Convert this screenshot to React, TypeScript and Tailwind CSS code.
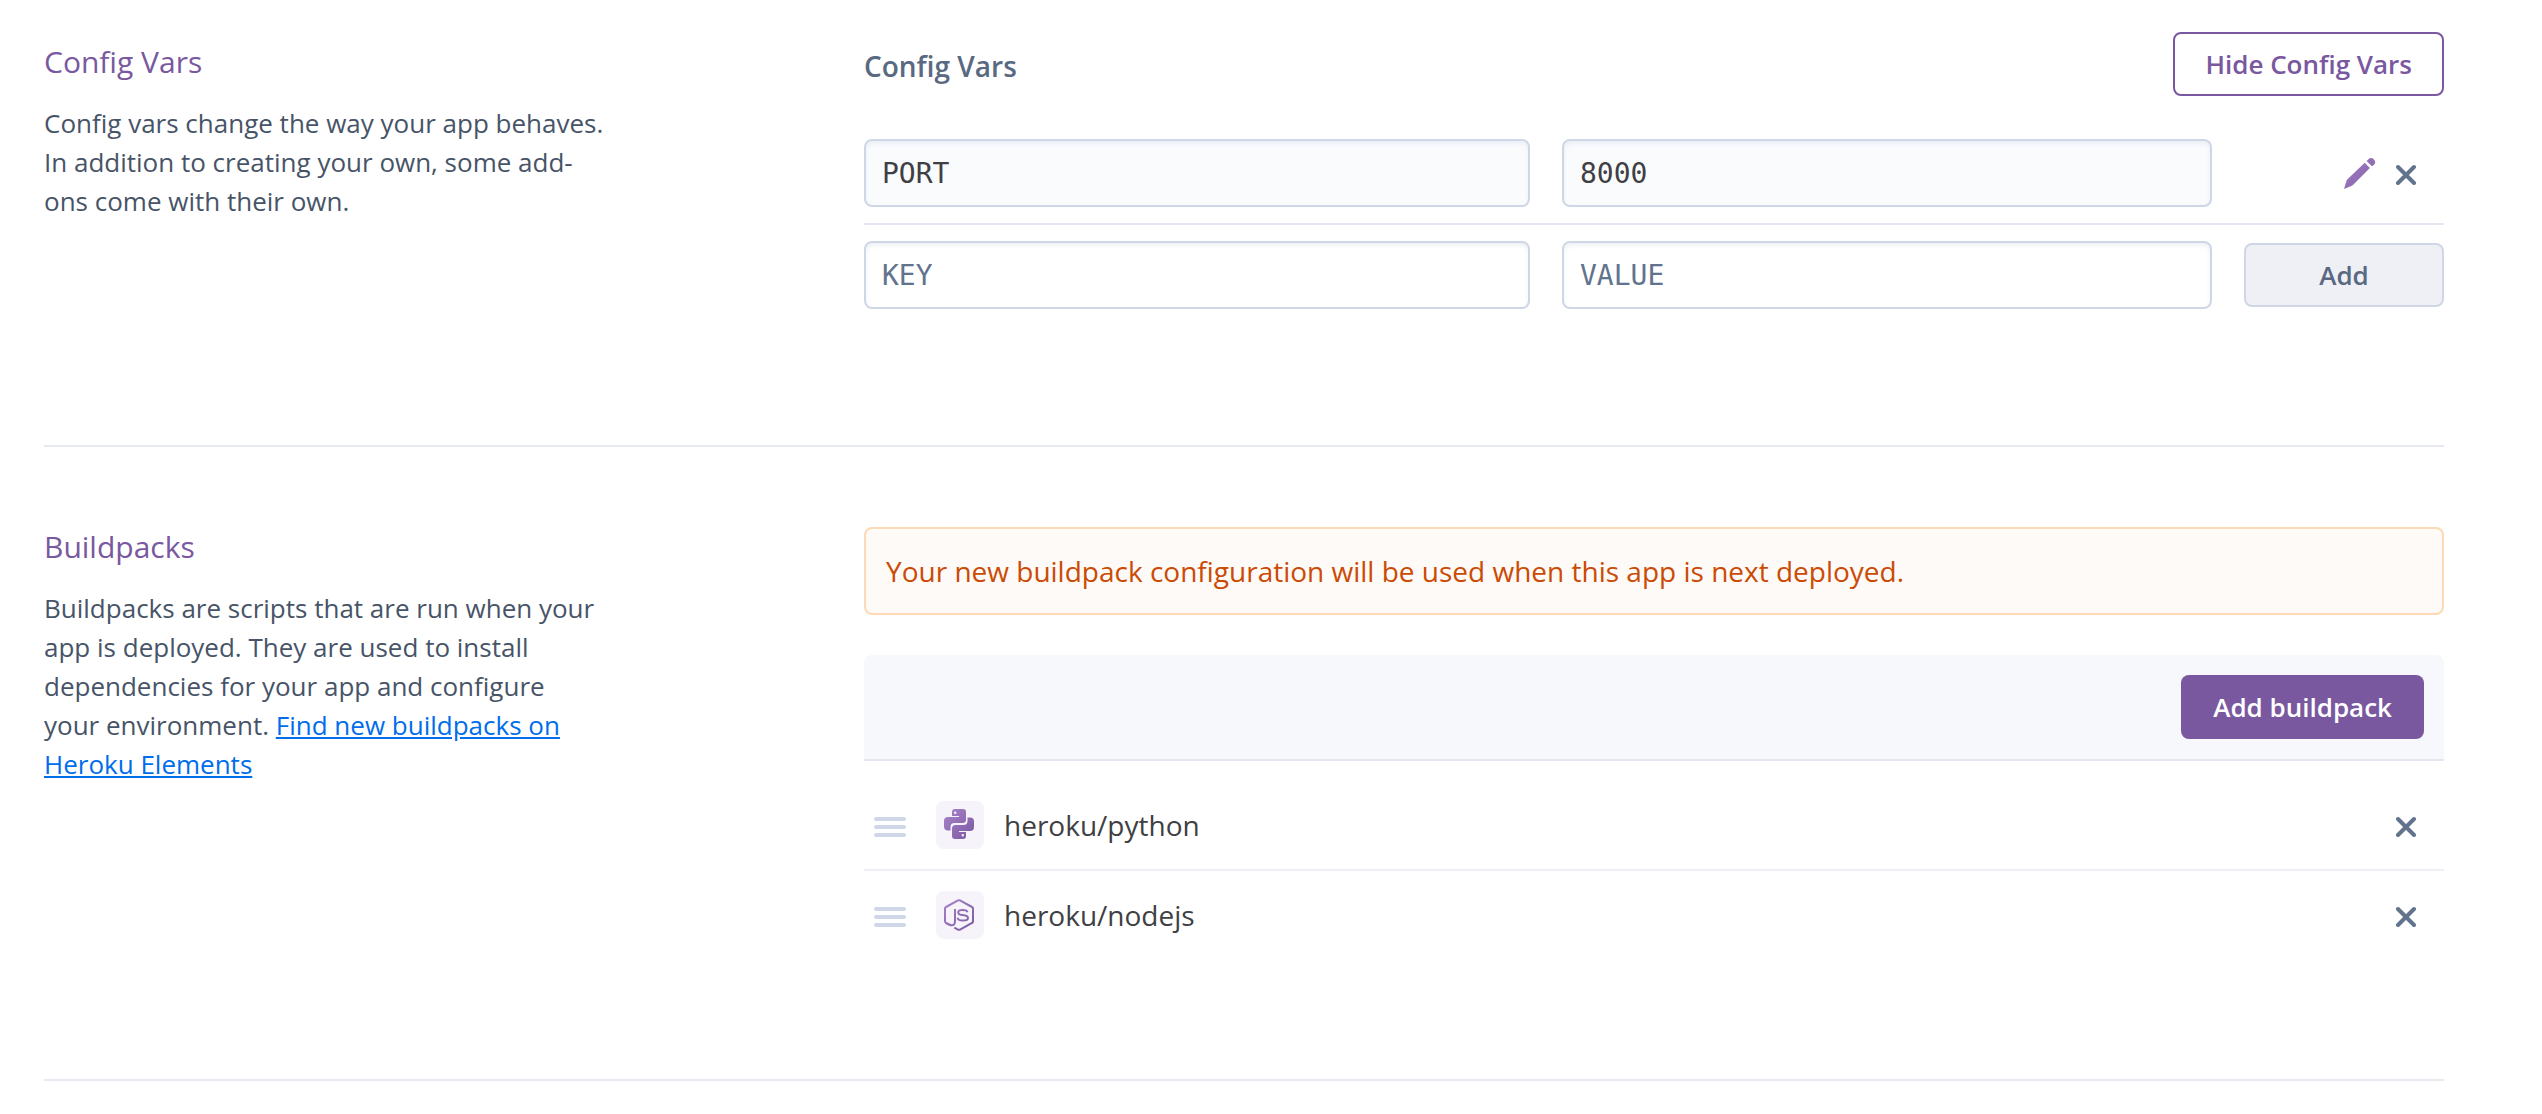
import React from "react";

function CloseIcon() {
  return (
    <svg className="h-6 w-5" viewBox="0 -4 20 24" fill="none" stroke="#62738d" strokeWidth="4" strokeLinecap="round" aria-hidden="true">
      <path d="M2 2 18 18M18 2 2 18" />
    </svg>
  );
}

function PencilIcon() {
  return (
    <svg className="size-8" viewBox="0 0 32 32" aria-hidden="true">
      <defs>
        <linearGradient id="pencil" x1="0" y1="0" x2="1" y2="1">
          <stop offset="0" stopColor="#a07cc3" />
          <stop offset="1" stopColor="#8763ab" />
        </linearGradient>
      </defs>
      <path
        fill="url(#pencil)"
        d="M0 32 2.6 23.6Q2.9 22.8 3.5 22.2L20.7 5.8 25.9 11 9.2 27.7Q8.6 28.3 7.8 28.7ZM22.6 4 24.2 2.4A3.9 3.9 0 0 1 29.8 7.9L27.9 9.3Z"
      />
    </svg>
  );
}

function PythonIcon() {
  const half =
    "M8 3Q8 0 11 0H19Q22 0 22 3V10.5Q22 14 18.5 14H10.5Q6.5 14 6.5 18V21.5H4Q0 21.5 0 17.5V12Q0 8 4 8H15V7H8ZM11.2 2.5A1.2 1.2 0 1 0 11.2 4.9 1.2 1.2 0 1 0 11.2 2.5Z";
  return (
    <svg className="size-8" viewBox="0 0 32 32" aria-hidden="true">
      <defs>
        <linearGradient id="python" gradientUnits="userSpaceOnUse" x1="0" y1="0" x2="30" y2="30">
          <stop offset="0" stopColor="#a983cb" />
          <stop offset="1" stopColor="#79589f" />
        </linearGradient>
        <linearGradient id="python-turned" gradientUnits="userSpaceOnUse" x1="30" y1="30" x2="0" y2="0">
          <stop offset="0" stopColor="#a983cb" />
          <stop offset="1" stopColor="#79589f" />
        </linearGradient>
      </defs>
      <path fill="url(#python)" fillRule="evenodd" d={half} />
      <path fill="url(#python-turned)" fillRule="evenodd" d={half} transform="rotate(180 15 15)" />
    </svg>
  );
}

function NodeIcon() {
  return (
    <svg className="size-8" viewBox="0 0 32 32" fill="none" stroke="url(#node)" strokeWidth="2" aria-hidden="true">
      <defs>
        <linearGradient id="node" gradientUnits="userSpaceOnUse" x1="0" y1="0" x2="30" y2="32">
          <stop offset="0" stopColor="#a983cb" />
          <stop offset="1" stopColor="#79589f" />
        </linearGradient>
      </defs>
      <path d="M11 10V22Q11 26.5 7.3 26.3 6 26.2 2 24 1 23.3 1 22V9.5Q1 8.5 2 8L14 1.4Q15 .9 16 1.4L28 8Q29 8.5 29 9.5V22.5Q29 23.5 28 24L16.5 30.4Q15 31.2 13.5 30.4L10.3 28.6" />
      <path d="M23.4 13.2Q23 11 18.6 11 14.2 11 14.2 13.4 14.2 15.6 18.6 16 24 16.5 24 19 24 21.6 18.8 21.6 13.9 21.6 13.7 18.8" />
    </svg>
  );
}

function GripIcon() {
  return (
    <svg className="h-6 w-8" viewBox="0 -4 32 24" fill="#cfd7e6" aria-hidden="true">
      <rect width="32" height="4" rx="2" />
      <rect y="8" width="32" height="4" rx="2" />
      <rect y="16" width="32" height="4" rx="2" />
    </svg>
  );
}

const field =
  "h-[68px] w-full min-w-0 rounded-lg border-2 border-[#cfd7e6] px-4 font-['DejaVu_Sans_Mono',monospace] text-[28px] text-[#3f3f44] shadow-[inset_0_3px_4px_rgba(207,215,230,0.35)] outline-none placeholder:text-[#62738d] placeholder:opacity-100";

type SectionProps = { title: string; about: React.ReactNode; introClass?: string; children: React.ReactNode };

function Section({ title, about, introClass = "", children }: SectionProps) {
  return (
    <section className="grid grid-cols-[41fr_79fr] border-b-2 border-[#e7e9f0]">
      <div className={introClass}>
        <h2 className="text-[30px] leading-[40px] text-[#79589f]">{title}</h2>
        <p className="mt-[22px] max-w-[560px] text-[26px] leading-[39px] text-[#475468]">{about}</p>
      </div>
      <div className="min-w-0">{children}</div>
    </section>
  );
}

const buildpacks = [
  { name: "heroku/python", icon: <PythonIcon /> },
  { name: "heroku/nodejs", icon: <NodeIcon /> },
];

export default function App() {
  return (
    <main className="flex flex-col gap-20 bg-white pt-8 pr-[98px] pl-11 font-['Open_Sans',sans-serif]">
      <Section
        title="Config Vars"
        introClass="pt-[10px]"
        about="Config vars change the way your app behaves. In addition to creating your own, some add-ons come with their own."
      >
        <div className="flex items-center justify-between">
          <h3 className="pt-1 text-[28px] font-semibold text-[#596981]">Config Vars</h3>
          <button type="button" className="h-16 rounded-lg border-2 border-[#79589f] px-[30px] text-[26px] font-semibold text-[#79589f]">
            Hide Config Vars
          </button>
        </div>
        <form className="mt-[27px] pb-[136px]" onSubmit={(e) => e.preventDefault()}>
          <div className="grid grid-cols-[333fr_325fr_200px] items-center gap-8 border-b-2 border-[#e3e7ef] py-4">
            <input aria-label="Config var key" readOnly defaultValue="PORT" className={`${field} bg-[#fafbfd]`} />
            <input aria-label="Config var value" readOnly defaultValue="8000" className={`${field} bg-[#fafbfd]`} />
            <div className="flex items-center justify-end gap-5 pr-7">
              <button type="button" aria-label="Edit PORT"><PencilIcon /></button>
              <button type="button" aria-label="Remove PORT"><CloseIcon /></button>
            </div>
          </div>
          <div className="grid grid-cols-[333fr_325fr_200px] items-center gap-8 pt-4">
            <input aria-label="New key" placeholder="KEY" className={`${field} bg-white`} />
            <input aria-label="New value" placeholder="VALUE" className={`${field} bg-white`} />
            <button type="submit" className="h-16 rounded-lg border-2 border-[#cfd7e6] bg-[#eff0f6] text-[26px] font-semibold text-[#596981]">
              Add
            </button>
          </div>
        </form>
      </Section>

      <Section
        title="Buildpacks"
        about={
          <>
            Buildpacks are scripts that are run when your app is deployed. They are used to install dependencies for your app and configure your environment.{" "}
            <a href="#elements" className="text-[#006deb] underline">
              Find new buildpacks on Heroku Elements
            </a>
          </>
        }
      >
        <p role="status" className="rounded-lg border-2 border-[#fdd9b5] bg-[#fefaf7] px-5 py-[21px] text-[28px] leading-[42px] text-[#cb4b05]">
          Your new buildpack configuration will be used when this app is next deployed.
        </p>
        <div className="mt-10 flex justify-end rounded-t-lg border-b-2 border-[#e3e7ef] bg-[#f7f8fb] p-5">
          <button type="button" className="h-16 rounded-lg bg-[#79589f] px-8 text-[26px] font-semibold text-white">
            Add buildpack
          </button>
        </div>
        <ul className="pt-5 pb-[118px]">
          {buildpacks.map((b) => (
            <li key={b.name} className="flex h-[90px] items-center border-b-2 border-[#efeff6] pr-7 pl-[10px] last:border-transparent">
              <GripIcon />
              <span className="ml-[30px] flex size-12 items-center justify-center rounded-lg bg-[#f6f3fb]">{b.icon}</span>
              <span className="ml-5 text-[28px] text-[#3f3f44]">{b.name}</span>
              <button type="button" aria-label={`Remove ${b.name}`} className="ml-auto"><CloseIcon /></button>
            </li>
          ))}
        </ul>
      </Section>
    </main>
  );
}
